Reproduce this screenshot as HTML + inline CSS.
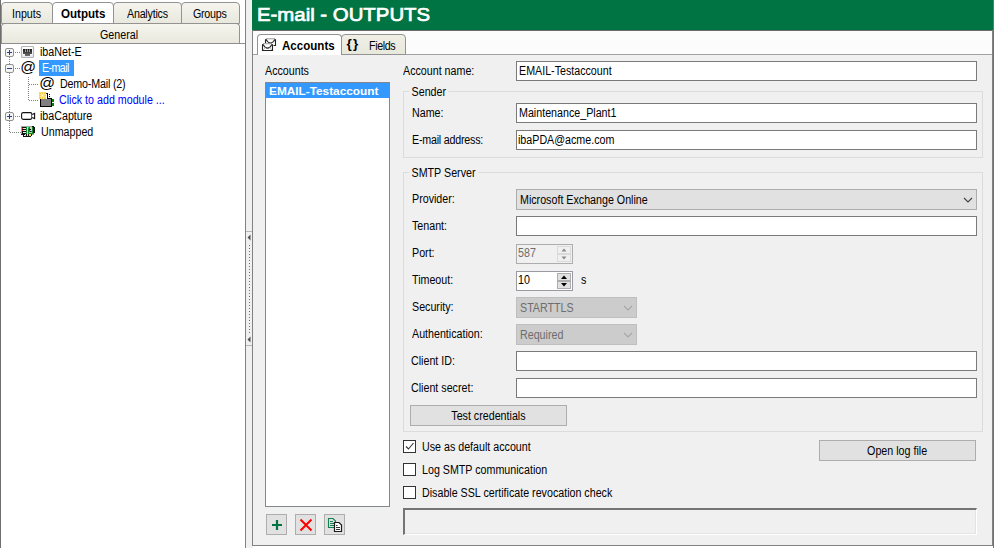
<!DOCTYPE html>
<html><head><meta charset="utf-8">
<style>
*{box-sizing:border-box;margin:0;padding:0}
html,body{width:994px;height:548px;overflow:hidden;background:#fff}
body{font-family:"Liberation Sans",sans-serif;font-size:12px;color:#000;position:relative}
.abs{position:absolute}
.t{position:absolute;white-space:nowrap;line-height:14px;font-size:12.5px;transform:scaleX(.855);transform-origin:0 0}
.ltab{position:absolute;top:2px;height:22px;border:1px solid #939393;border-radius:4px 4px 0 0;background:linear-gradient(#f5f5ef,#e9e8dd)}
.b{font-weight:bold;transform:scaleX(.925)}
.inp{position:absolute;background:#fff;border:1px solid #7a7a7a;height:20px}
.inp span{position:absolute;left:1.5px;top:2px;line-height:14px;font-size:12.5px;white-space:nowrap;transform:scaleX(.855);transform-origin:0 0}
.btn{position:absolute;background:#e1e1e1;border:1px solid #adadad;text-align:center;line-height:20.5px;font-size:12.5px}
.btn span{display:inline-block;transform:scaleX(.855)}
.grp{position:absolute;border:1px solid #dcdcdc}
.cmb{position:absolute;background:#cccccc;border:1px solid #bfbfbf;height:21px;color:#6d6d6d}
.cmb span{position:absolute;left:3px;top:3px;line-height:14px;font-size:12.5px;white-space:nowrap;transform:scaleX(.855);transform-origin:0 0}
.cb{position:absolute;width:13px;height:13px;border:1px solid #333;background:#fff}
</style></head><body>
<!-- LEFT PANE -->
<div class="abs" style="left:0;top:0;width:245px;height:548px;background:#fff"></div>
<!-- left tabs -->
<div class="abs" style="left:0;top:0;width:1px;height:548px;background:#6e6e6e"></div>
<div class="ltab" style="left:1px;width:52px"></div>
<div class="ltab" style="left:113px;width:69px"></div>
<div class="ltab" style="left:181px;width:59px"></div>
<div class="ltab" style="left:52px;width:62px;background:#fff"></div>
<div class="ltab" style="left:1px;top:23px;width:239px;height:21px;border-bottom:none"></div>
<div class="t" style="left:12px;top:7px">Inputs</div>
<div class="t b" style="left:61px;top:7px">Outputs</div>
<div class="t" style="left:127px;top:7px;letter-spacing:-.25px">Analytics</div>
<div class="t" style="left:192.5px;top:7px;letter-spacing:-.3px">Groups</div>
<div class="t" style="left:100px;top:28px">General</div>
<div class="abs" style="left:1px;top:43px;width:244px;height:1px;background:#8e8e8e"></div>
<!-- tree -->
<div class="abs" style="left:39px;top:60px;width:35px;height:16px;background:#3399ff"></div>
<div class="t" style="left:40px;top:45px">ibaNet-E</div>
<div class="t" style="left:41.5px;top:61px;color:#fff;letter-spacing:-.7px">E-mail</div>
<div class="t" style="left:60px;top:77px;letter-spacing:-.2px">Demo-Mail (2)</div>
<div class="t" style="left:59px;top:93px;color:#0000ff">Click to add module ...</div>
<div class="t" style="left:40px;top:109px">ibaCapture</div>
<div class="t" style="left:41px;top:125px">Unmapped</div>
<svg class="abs" style="left:0;top:0" width="245" height="150" viewBox="0 0 245 150">
<g stroke="#808080" stroke-width="1" stroke-dasharray="1 1" fill="none" shape-rendering="crispEdges">
<path d="M9.5 57V132M15 52.5H21M15 68.5H21M15 116.5H21M10 132.5H21M28.5 77V101M29 84.5H39M29 100.5H39"/>
</g>
<!-- expand boxes -->
<g id="pm">
<rect x="5.5" y="48.5" width="8" height="8" rx="1.5" fill="#f4f4f2" stroke="#919191"/>
<path d="M7 52.5H12M9.5 50V55" stroke="#27408b" stroke-width="1" shape-rendering="crispEdges"/>
</g>
<rect x="5.5" y="64.5" width="8" height="8" rx="1.5" fill="#f4f4f2" stroke="#919191"/>
<path d="M7 68.5H12" stroke="#27408b" stroke-width="1" shape-rendering="crispEdges"/>
<rect x="5.5" y="112.5" width="8" height="8" rx="1.5" fill="#f4f4f2" stroke="#919191"/>
<path d="M7 116.5H12M9.5 114V119" stroke="#27408b" stroke-width="1" shape-rendering="crispEdges"/>
<!-- ibaNet-E icon -->
<defs><linearGradient id="pg" x1="0" y1="0" x2="0" y2="1"><stop offset="0" stop-color="#161616"/><stop offset="1" stop-color="#707070"/></linearGradient>
<linearGradient id="ig" x1="0" y1="0" x2="0" y2="1"><stop offset="0" stop-color="#ffffff"/><stop offset=".6" stop-color="#fafafa"/><stop offset="1" stop-color="#e2e2f0"/></linearGradient></defs>
<rect x="21.500" y="46.500" width="12" height="11" rx="1" fill="url(#ig)" stroke="#b4b4b4" stroke-width="1.2"/>
<path d="M23 49H32V54H30V56H25V54H23Z" fill="url(#pg)"/>
<path d="M25.500 49.300V52M27.500 49.300V52M29.500 49.300V52" stroke="#d8a848" stroke-width=".9"/>
<!-- camera -->
<rect x="21.6" y="112.6" width="10.3" height="6.8" rx="1.6" fill="#fff" stroke="#111" stroke-width="1.1"/>
<path d="M32.3 114.6L34.6 113.4V118.6L32.3 117.4" fill="#fff" stroke="#111" stroke-width="1.1"/>
<!-- add module -->
<g shape-rendering="crispEdges">
<rect x="41" y="99" width="10" height="7" fill="#808080"/>
<rect x="40" y="99" width="1" height="8" fill="#000"/><rect x="40" y="106" width="12" height="1" fill="#000"/><rect x="51" y="99" width="1" height="8" fill="#000"/>
<rect x="47" y="98" width="5" height="1" fill="#000"/><rect x="47" y="93" width="1" height="6" fill="#000"/><rect x="46" y="93" width="1" height="1" fill="#333"/>
<rect x="49" y="94" width="1" height="1" fill="#000"/><rect x="49" y="96" width="1" height="1" fill="#000"/>
<rect x="52" y="99" width="2" height="3" fill="#008000"/><rect x="52" y="103" width="2" height="3" fill="#008000"/>
<rect x="39" y="92" width="7" height="7" fill="#f8d448"/>
<rect x="41" y="92" width="1" height="7" fill="#fbe48c"/><rect x="43" y="92" width="1" height="7" fill="#fbe48c"/><rect x="39" y="94" width="7" height="1" fill="#fbe48c"/><rect x="39" y="96" width="7" height="1" fill="#fbe48c"/>
<rect x="42" y="95" width="1" height="1" fill="#fffbe8"/>
</g>
<!-- unmapped pcb -->
<g shape-rendering="crispEdges">
<rect x="21" y="126" width="13" height="9" fill="#a6a6a6"/>
<rect x="22" y="127" width="12" height="7" fill="#0c8c2c"/>
<rect x="22" y="127" width="4" height="7" fill="#111"/>
<rect x="23" y="128" width="3" height="1" fill="#eee"/><rect x="23" y="130" width="3" height="1" fill="#eee"/><rect x="23" y="132" width="3" height="1" fill="#eee"/>
<rect x="22" y="128" width="1" height="1" fill="#f01818"/><rect x="22" y="130" width="1" height="1" fill="#f01818"/>
<rect x="27" y="127" width="1" height="7" fill="#d8d8d8"/>
<rect x="28" y="127" width="1" height="1" fill="#30f040"/>
<rect x="30" y="127" width="2" height="4" fill="#d0d0d0"/><rect x="29" y="129" width="2" height="1" fill="#111"/><rect x="29" y="132" width="3" height="1" fill="#c8c8c8"/><rect x="30" y="131" width="1" height="1" fill="#111"/>
<rect x="33" y="127" width="2" height="6" fill="#111"/><rect x="32" y="126" width="2" height="1" fill="#111"/>
<rect x="21" y="134" width="11" height="1" fill="#111"/><rect x="23" y="135" width="9" height="1" fill="#111"/><rect x="23" y="136" width="8" height="1" fill="#111"/>
<rect x="25" y="134" width="1" height="2" fill="#f4e830"/><rect x="27" y="134" width="1" height="2" fill="#f4e830"/><rect x="29" y="134" width="2" height="2" fill="#f4e830"/><rect x="24" y="135" width="1" height="1" fill="#fff"/>
</g>
</svg>
<div class="abs" style="left:20px;top:58px;font-size:15.5px;line-height:18px;width:16px;text-align:center">@</div>
<div class="abs" style="left:39px;top:74px;font-size:15.5px;line-height:18px;width:16px;text-align:center">@</div>

<!-- splitter -->
<div class="abs" style="left:245px;top:0;width:1px;height:548px;background:#828282"></div>
<div class="abs" style="left:246px;top:0;width:6px;height:548px;background:#f0f0f0"></div>

<!-- RIGHT PANE -->
<div class="abs" style="left:252px;top:0;width:741px;height:548px;background:#f0f0f0"></div>
<div class="abs" style="left:252px;top:0;width:741px;height:30px;background:#007442"></div>
<div class="abs" style="left:993px;top:0;width:1px;height:548px;background:#1e86e0"></div>
<div class="abs" style="left:252px;top:30px;width:741px;height:24px;background:#fcfcfc"></div>
<div class="abs" style="left:252px;top:30px;width:741px;height:1px;background:#6e6a68"></div>
<div class="abs" style="left:252px;top:30px;width:1px;height:516px;background:#828282"></div>
<div class="abs" style="left:992px;top:30px;width:1px;height:516px;background:#828282"></div>
<div class="abs" style="left:252px;top:545px;width:741px;height:1px;background:#828282"></div>
<div class="abs" style="left:253px;top:546px;width:740px;height:2px;background:#fff"></div>
<div class="abs" style="left:253px;top:54px;width:739px;height:1px;background:#a0a0a0"></div>
<div class="t" style="left:257px;top:3px;font-size:19px;line-height:24px;color:#fff;-webkit-text-stroke:.7px #fff;transform:scaleX(1.072)">E-mail - OUTPUTS</div>
<!-- tabs -->
<div class="abs" style="left:341px;top:34px;width:65px;height:21px;background:linear-gradient(#f0efe6,#e9e8dc);border:1px solid #939393;border-radius:4px 4px 0 0"></div>
<div class="abs" style="left:257px;top:34px;width:85px;height:21px;background:#fff;border:1px solid #939393;border-bottom:none;border-radius:4px 4px 0 0"></div>
<svg class="abs" style="left:258px;top:34px" width="26" height="22" viewBox="258 34 26 22" fill="none" stroke="#222" stroke-width="1.1">
<path d="M265.5 43V39.2M275.5 39.2V45.500H273.500"/><path d="M266 38.800H275" stroke="#8c8c8c" stroke-width=".9"/><path d="M265.800 39.200Q270.500 46.800 275.200 39.200"/>
<rect x="263" y="44" width="9" height="6" fill="#fff" stroke="none"/>
<path d="M262.500 44.200V50.500H272.500V44.200"/><path d="M263 43.700H272" stroke="#8c8c8c" stroke-width=".9"/>
<path d="M262.800 44.200Q267.500 52 272.200 44.200"/><path d="M263 50L265.600 47.500M272 50L269.400 47.500" stroke="#9a9a9a" stroke-width=".7"/>
</svg>
<div class="t b" style="left:282px;top:38.5px">Accounts</div>
<div class="t" style="left:346.5px;top:35.5px;font-weight:bold;font-size:13.5px;line-height:16px;letter-spacing:1.2px;transform:none">{}</div>
<div class="t" style="left:369px;top:38.5px;letter-spacing:-.45px">Fields</div>

<!-- accounts list -->
<div class="t" style="left:265px;top:64px">Accounts</div>
<div class="abs" style="left:265px;top:82px;width:125px;height:425px;background:#fff;border:1px solid #828790"></div>
<div class="abs" style="left:266px;top:83px;width:123px;height:15px;background:#3399ff"></div>
<div class="t" style="left:268.5px;top:84.5px;color:#fff;font-weight:bold;font-size:11.5px;line-height:13px;transform:scaleX(1.027)">EMAIL-Testaccount</div>
<div class="btn" style="left:266px;top:514px;width:21px;height:21px"></div>
<div class="btn" style="left:295px;top:514px;width:21px;height:21px"></div>
<div class="btn" style="left:324px;top:514px;width:21px;height:21px"></div>
<svg class="abs" style="left:260px;top:510px" width="100" height="30" viewBox="260 510 100 30" fill="none">
<path d="M272 525H282M277 520V530" stroke="#007442" stroke-width="2.2"/>
<path d="M300.5 519.5L311.5 530.5M311.5 519.5L300.5 530.5" stroke="#ff0000" stroke-width="2"/>
<path d="M328.5 518.5H333L335.5 521V527.5H328.5Z" stroke="#128050" stroke-width="1.1" fill="#e1e1e1"/>
<path d="M330 521.5H333M330 523.5H334M330 525.5H334" stroke="#128050" stroke-width="1"/>
<path d="M334.5 522.5H339L341.5 525V531.5H334.5Z" stroke="#1a1a1a" stroke-width="1.2" fill="#fff"/>
<path d="M336 525.5H337.5M336 527.5H340M336 529.5H340" stroke="#1a1a1a" stroke-width=".9"/>
</svg>

<!-- form -->
<div class="t" style="left:403px;top:64px">Account name:</div>
<div class="inp" style="left:516px;top:61px;width:461px"><span>EMAIL-Testaccount</span></div>

<div class="grp" style="left:403px;top:91px;width:580px;height:67px"></div>
<div class="t" style="left:409px;top:85px;background:#f0f0f0;padding:0 3px">Sender</div>
<div class="t" style="left:412px;top:106px">Name:</div>
<div class="inp" style="left:516px;top:103px;width:461px"><span>Maintenance_Plant1</span></div>
<div class="t" style="left:412px;top:133px;letter-spacing:-.25px">E-mail address:</div>
<div class="inp" style="left:516px;top:130px;width:461px"><span style="left:1px">ibaPDA@acme.com</span></div>

<div class="grp" style="left:403px;top:172px;width:580px;height:260px"></div>
<div class="t" style="left:409px;top:166px;background:#f0f0f0;padding:0 3px">SMTP Server</div>
<div class="t" style="left:412px;top:192px">Provider:</div>
<div class="abs" style="left:516px;top:189px;width:461px;height:21px;background:#e1e1e1;border:1px solid #adadad"><span class="t" style="left:3px;top:3px">Microsoft Exchange Online</span></div>
<svg class="abs" style="left:960px;top:194px" width="14" height="10" viewBox="960 194 14 10" fill="none"><path d="M964 198L968 202L972 198" stroke="#404040" stroke-width="1.1"/></svg>
<div class="t" style="left:412px;top:219px">Tenant:</div>
<div class="inp" style="left:516px;top:216px;width:461px"></div>
<div class="t" style="left:412px;top:246px">Port:</div>
<div class="abs" style="left:516px;top:244px;width:57px;height:20px;background:#f0f0f0;border:1px solid #adadad"><span class="t" style="left:1px;top:1px;color:#6d6d6d">587</span></div>
<div class="abs" style="left:557px;top:246px;width:14px;height:8px;background:#f0f0f0;border:1px solid #dadada"></div>
<div class="abs" style="left:557px;top:254px;width:14px;height:8px;background:#f0f0f0;border:1px solid #dadada"></div>
<svg class="abs" style="left:557px;top:246px" width="14" height="16" viewBox="0 0 14 16"><path d="M4.5 5.5L7 2.5L9.5 5.5Z" fill="#8a8a8a"/><path d="M4.5 10.5L7 13.5L9.5 10.5Z" fill="#8a8a8a"/></svg>
<div class="t" style="left:412px;top:273px">Timeout:</div>
<div class="abs" style="left:516px;top:271px;width:57px;height:20px;background:#fff;border:1px solid #9a9aa0"><span class="t" style="left:1px;top:1px">10</span></div>
<div class="abs" style="left:557px;top:273px;width:14px;height:8px;background:#e1e1e1;border:1px solid #adadad"></div>
<div class="abs" style="left:557px;top:281px;width:14px;height:8px;background:#e1e1e1;border:1px solid #adadad"></div>
<svg class="abs" style="left:557px;top:273px" width="14" height="16" viewBox="0 0 14 16"><path d="M4 6L7 2.5L10 6Z" fill="#000"/><path d="M4 10L7 13.5L10 10Z" fill="#000"/></svg>
<div class="t" style="left:581px;top:273px">s</div>
<div class="t" style="left:412px;top:300px">Security:</div>
<div class="cmb" style="left:516px;top:297px;width:121px"><span>STARTTLS</span></div>
<div class="t" style="left:412px;top:327px">Authentication:</div>
<div class="cmb" style="left:516px;top:324px;width:121px"><span>Required</span></div>
<svg class="abs" style="left:620px;top:297px" width="16" height="48" viewBox="620 297 16 48" fill="none" stroke="#a6a6a6" stroke-width="1.1"><path d="M624 306L628 310L632 306M624 333L628 337L632 333"/></svg>
<div class="t" style="left:411px;top:354px">Client ID:</div>
<div class="inp" style="left:516px;top:351px;width:461px"></div>
<div class="t" style="left:411px;top:381px">Client secret:</div>
<div class="inp" style="left:516px;top:378px;width:461px"></div>
<div class="btn" style="left:410px;top:405px;width:157px;height:21px"><span>Test credentials</span></div>

<div class="cb" style="left:403px;top:440px"></div>
<svg class="abs" style="left:403px;top:440px" width="13" height="13" viewBox="0 0 13 13" fill="none"><path d="M3 6.5L5.5 9L10.5 3" stroke="#333" stroke-width="1.1"/></svg>
<div class="t" style="left:422px;top:439.5px">Use as default account</div>
<div class="cb" style="left:403px;top:463px"></div>
<div class="t" style="left:422px;top:462.5px">Log SMTP communication</div>
<div class="cb" style="left:403px;top:486px"></div>
<div class="t" style="left:422px;top:485.5px">Disable SSL certificate revocation check</div>
<div class="btn" style="left:819px;top:440px;width:157px;height:21px"><span>Open log file</span></div>
<div class="abs" style="left:403px;top:508px;width:574px;height:27px;background:#f0f0f0;border-top:2px solid #747474;border-left:2px solid #747474;border-right:1px solid #fff;border-bottom:1px solid #fff;box-shadow:inset -1px -1px 0 #e3e3e3"></div>
<!-- splitter handle -->
<svg class="abs" style="left:245px;top:228px" width="8" height="122" viewBox="245 228 8 122">
<path d="M246 231.500H252M246 345.500H252" stroke="#b4b4b4" stroke-width="1" fill="none"/>
<path d="M250.500 234.500V240.500L247.500 237.500Z" fill="#505050"/>
<path d="M250.500 336.500V342.500L247.500 339.500Z" fill="#505050"/>
<path d="M249.500 245V334" stroke="#707070" stroke-width="1" stroke-dasharray="1 2" fill="none"/>
</svg>
</body></html>
